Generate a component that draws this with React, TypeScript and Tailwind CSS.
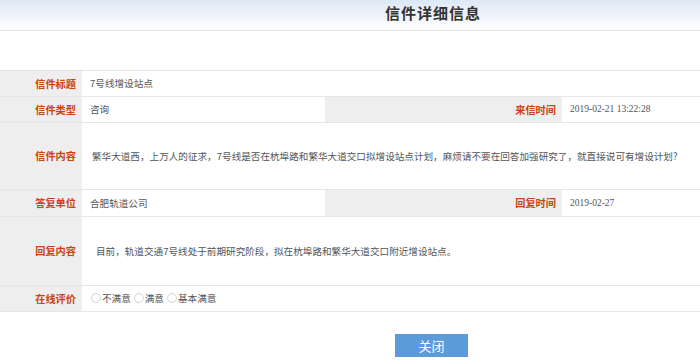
const cjk = "font-['Noto_Sans_CJK_SC','Noto_Sans',sans-serif]"

const Label = ({ text, className = '' }: { text: string; className?: string }) => (
  <div
    className={`flex items-center justify-end bg-[#eeeeee] pr-[6px] text-[10.2px] font-bold text-[#c9420f] ${className}`}
  >
    {text}
  </div>
)

const Radio = ({ text }: { text: string }) => (
  <label className="flex items-center gap-[1px]">
    <span className="inline-block h-[10px] w-[10px] rounded-full border border-[#d4d4d4] bg-white" />
    <span>{text}</span>
  </label>
)

const App = () => {
  return (
    <div className={`h-[363px] w-[700px] overflow-hidden bg-white ${cjk}`}>
      {/* Title bar */}
      <div className="h-[31px] border-b border-[#e6e6e6] bg-gradient-to-b from-[#dde8f4] to-white pl-[385px] pt-[1px]">
        <h1 className="text-[15px] font-bold leading-[24px] tracking-[1px] text-[#333]">
          信件详细信息
        </h1>
      </div>

      <div className="h-[39px]" />

      {/* Detail table */}
      <div className="whitespace-nowrap border-t border-[#e2e2e2] text-[9.6px] text-[#555]">
        <div className="flex h-[26px] border-b border-[#e6e6e6]">
          <Label text="信件标题" className="w-[82px]" />
          <div className="flex flex-1 items-center pl-[8px]">7号线增设站点</div>
        </div>

        <div className="flex h-[26px] border-b border-[#e6e6e6]">
          <Label text="信件类型" className="w-[82px]" />
          <div className="flex w-[243px] items-center pl-[8px]">咨询</div>
          <Label text="来信时间" className="w-[237px]" />
          <div className="flex flex-1 items-center pl-[8px] font-['Liberation_Serif',serif] text-[9.5px]">
            2019-02-21 13:22:28
          </div>
        </div>

        <div className="flex h-[67px] border-b border-[#e6e6e6]">
          <Label text="信件内容" className="w-[82px]" />
          <div className="flex flex-1 items-center pl-[10px]">
            繁华大道西，上万人的征求，7号线是否在杭埠路和繁华大道交口拟增设站点计划，麻烦请不要在回答加强研究了，就直接说可有增设计划?
          </div>
        </div>

        <div className="flex h-[27px] border-b border-[#e6e6e6]">
          <Label text="答复单位" className="w-[82px]" />
          <div className="flex w-[243px] items-center pl-[8px]">合肥轨道公司</div>
          <Label text="回复时间" className="w-[237px]" />
          <div className="flex flex-1 items-center pl-[8px] font-['Liberation_Serif',serif] text-[9.5px]">
            2019-02-27
          </div>
        </div>

        <div className="flex h-[69px] border-b border-[#e6e6e6]">
          <Label text="回复内容" className="w-[82px]" />
          <div className="flex flex-1 items-center pl-[14px]">
            目前，轨道交通7号线处于前期研究阶段，拟在杭埠路和繁华大道交口附近增设站点。
          </div>
        </div>

        <div className="flex h-[26px] border-b border-[#e6e6e6]">
          <Label text="在线评价" className="w-[82px]" />
          <div className="flex flex-1 items-center gap-[3px] pl-[9px]">
            <Radio text="不满意" />
            <Radio text="满意" />
            <Radio text="基本满意" />
          </div>
        </div>
      </div>

      {/* Actions */}
      <div className="pl-[395px] pt-[20px]">
        <button className="h-[23px] w-[73px] bg-[#5b9bd9] text-[13px] leading-[23px] text-white">
          关闭
        </button>
      </div>
    </div>
  )
}

export default App
